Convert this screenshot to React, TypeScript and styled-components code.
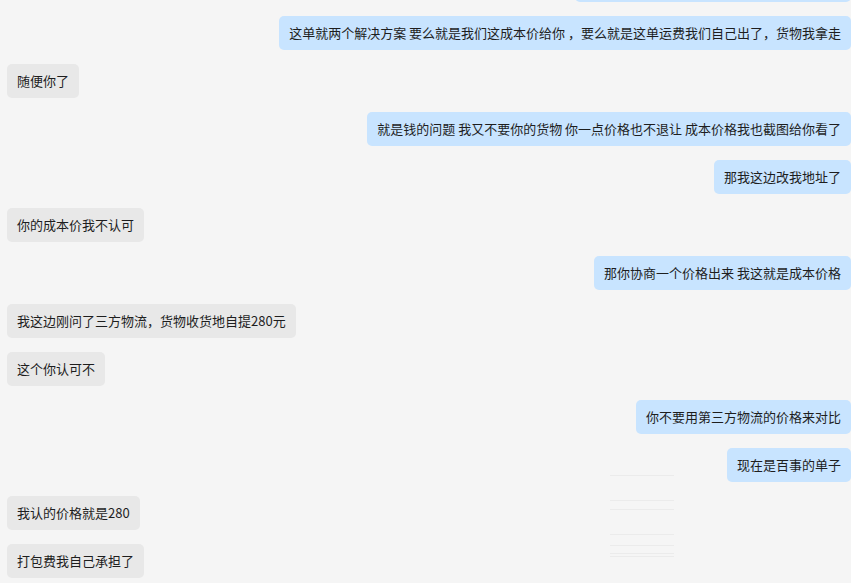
import styled, { createGlobalStyle } from "styled-components";

type Msg = { me: boolean; text: string; width?: number };

// the first bubble is scrolled almost out of view, only its lower edge shows
const messages: Msg[] = [
  { me: true, text: "", width: 276 },
  {
    me: true,
    text: "这单就两个解决方案 要么就是我们这成本价给你 ，要么就是这单运费我们自己出了，货物我拿走",
  },
  { me: false, text: "随便你了" },
  {
    me: true,
    text: "就是钱的问题 我又不要你的货物 你一点价格也不退让 成本价格我也截图给你看了",
  },
  { me: true, text: "那我这边改我地址了" },
  { me: false, text: "你的成本价我不认可" },
  { me: true, text: "那你协商一个价格出来 我这就是成本价格" },
  { me: false, text: "我这边刚问了三方物流，货物收货地自提280元" },
  { me: false, text: "这个你认可不" },
  { me: true, text: "你不要用第三方物流的价格来对比" },
  { me: true, text: "现在是百事的单子" },
  { me: false, text: "我认的价格就是280" },
  { me: false, text: "打包费我自己承担了" },
];

const fadedLines = [0, 25, 34, 59, 70, 78, 81];

const App = () => {
  return (
    <>
      <GlobalStyle />
      <ChatLog>
        {messages.map((m, i) => (
          <Row key={i} $me={m.me}>
            <Bubble $me={m.me} $width={m.width}>
              {m.text}
            </Bubble>
          </Row>
        ))}
      </ChatLog>
      <Ghost>
        {fadedLines.map((y) => (
          <GhostLine key={y} style={{ top: y }} />
        ))}
      </Ghost>
    </>
  );
};

const GlobalStyle = createGlobalStyle`
  html, body {
    margin: 0;
    padding: 0;
    height: 100%;
    overflow: hidden;
    background: #f5f5f5;
  }
  body {
    font-family: "Noto Sans CJK SC", "Noto Sans", sans-serif;
  }
`;

const ChatLog = styled.div`
  display: flex;
  flex-direction: column;
  gap: 14px;
  margin-top: -32px;
  padding: 0 0 0 7px;
`;

const Row = styled.div<{ $me: boolean }>`
  display: flex;
  justify-content: ${(p) => (p.$me ? "flex-end" : "flex-start")};
`;

const Bubble = styled.div<{ $me: boolean; $width?: number }>`
  box-sizing: border-box;
  height: 34px;
  min-width: ${(p) => (p.$width ? `${p.$width}px` : "0")};
  padding: 0 10px;
  display: flex;
  align-items: center;
  white-space: nowrap;

  font-size: 13px;
  line-height: 18px;
  color: #1e1e1e;
  background-color: ${(p) => (p.$me ? "#c8e4ff" : "#e8e8e8")};
  border-radius: 5px;
`;

const Ghost = styled.div`
  position: absolute;
  left: 610px;
  top: 475px;
  width: 64px;
  height: 90px;
`;

const GhostLine = styled.div`
  position: absolute;
  left: 0;
  right: 0;
  height: 1px;
  background: #ebebeb;
`;

export default App;
